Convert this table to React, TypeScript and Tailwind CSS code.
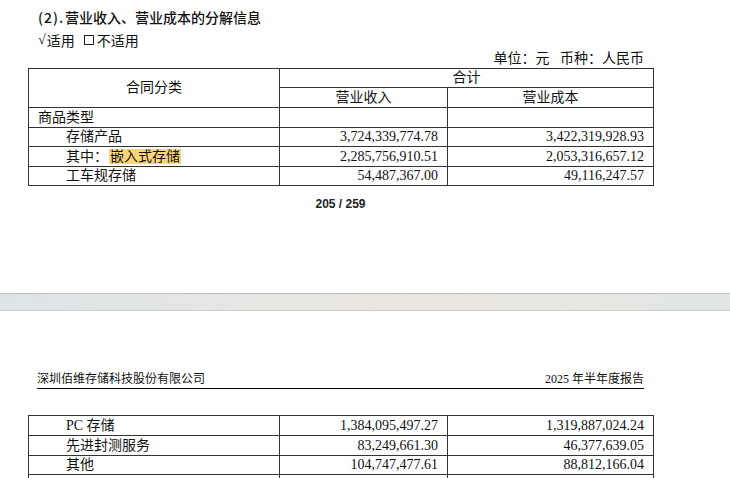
import React from "react";

const serif = { fontFamily: '"Liberation Serif", "Noto Sans CJK SC", serif' };

function Row({
  label,
  a,
  b,
  indent = true,
  h,
}: {
  label: React.ReactNode;
  a: string;
  b: string;
  indent?: boolean;
  h: string;
}) {
  return (
    <tr className={h}>
      <td className={`border border-[#333] p-0 leading-none ${indent ? "pl-[37px]" : "pl-[9px]"}`}>{label}</td>
      <td className="border border-[#333] p-0 pr-[9px] text-right leading-none">{a}</td>
      <td className="border border-[#333] p-0 pr-[9px] text-right leading-none">{b}</td>
    </tr>
  );
}

export default function App() {
  return (
    <div className="h-[478px] w-[730px] overflow-hidden bg-white text-[#111]" style={serif}>
      {/* Page 1 */}
      <div className="h-[293px] flex flex-col">
        <div
          className="pl-[38px] pt-[7px] h-[27px] text-[14px] leading-[20px] font-medium"
          style={{ fontFamily: '"Noto Sans CJK SC", sans-serif' }}
        >
          <span className="inline-block w-[27px] tracking-[1px]">(2).</span>营业收入、营业成本的分解信息
        </div>
        <div className="pl-[38px] mt-[3px] h-[20px] text-[14px] leading-[20px] flex items-center">
          <span style={{ fontFamily: '"Liberation Serif", serif' }} className="mr-[1px]">√</span>
          <span style={{ fontFamily: '"Noto Sans CJK SC", sans-serif' }}>适用</span>
          <span className="ml-[9px] mr-[3px] inline-block h-[10px] w-[10px] border border-[#222]" />
          <span style={{ fontFamily: '"Noto Sans CJK SC", sans-serif' }}>不适用</span>
        </div>
        <div className="ml-[28px] w-[625px] pr-[9px] h-[18px] text-right text-[14px] leading-[18px] whitespace-pre">
          单位：元{"   "}币种：人民币
        </div>
        <table className="ml-[28px] w-[625px] table-fixed border-collapse text-[14px]">
          <colgroup>
            <col className="w-[251px]" />
            <col className="w-[168px]" />
            <col className="w-[206px]" />
          </colgroup>
          <tbody>
            <tr className="h-[19px]">
              <td rowSpan={2} className="border border-[#333] p-0 text-center leading-none">
                合同分类
              </td>
              <td colSpan={2} className="border border-[#333] p-0 text-center leading-none">
                合计
              </td>
            </tr>
            <tr className="h-[20px]">
              <td className="border border-[#333] p-0 text-center leading-none">营业收入</td>
              <td className="border border-[#333] p-0 text-center leading-none">营业成本</td>
            </tr>
            <Row h="h-[20px]" label="商品类型" a="" b="" indent={false} />
            <Row h="h-[19px]" label="存储产品" a="3,724,339,774.78" b="3,422,319,928.93" />
            <Row
              h="h-[20px]"
              label={
                <>
                  其中：
                  <span className="ml-[1px] inline-block bg-[#fbd57c] px-[1px] leading-[15px]">嵌入式存储</span>
                </>
              }
              a="2,285,756,910.51"
              b="2,053,316,657.12"
            />
            <Row h="h-[19px]" label="工车规存储" a="54,487,367.00" b="49,116,247.57" />
          </tbody>
        </table>
        <div
          className="ml-[28px] w-[625px] mt-[8px] h-[20px] text-center text-[12px] leading-[20px] font-bold text-[#222]"
          style={{ fontFamily: '"Liberation Sans", Arial, sans-serif' }}
        >
          205 / 259
        </div>
      </div>

      {/* Page gap bar */}
      <div className="h-[18px] border-t border-b border-t-[#bdbdbd] border-b-[#cdcdcd] bg-[linear-gradient(90deg,#dde4e7_0%,#e6e6e3_35%,#ebe6df_55%,#e6e6e2_80%,#dfe6e3_100%)]" />

      {/* Page 2 */}
      <div className="flex flex-col">
        <div className="ml-[37px] w-[607px] mt-[60px] h-[18px] border-b border-black flex justify-between items-start text-[12px] leading-[16px]">
          <span>深圳佰维存储科技股份有限公司</span>
          <span>2025 年半年度报告</span>
        </div>
        <table className="ml-[28px] mt-[26px] w-[625px] table-fixed border-collapse text-[14px]">
          <colgroup>
            <col className="w-[251px]" />
            <col className="w-[168px]" />
            <col className="w-[206px]" />
          </colgroup>
          <tbody>
            <Row h="h-[20px]" label="PC 存储" a="1,384,095,497.27" b="1,319,887,024.24" />
            <Row h="h-[20px]" label="先进封测服务" a="83,249,661.30" b="46,377,639.05" />
            <Row h="h-[19px]" label="其他" a="104,747,477.61" b="88,812,166.04" />
            <Row h="h-[20px]" label="" a="" b="" />
          </tbody>
        </table>
      </div>
    </div>
  );
}
